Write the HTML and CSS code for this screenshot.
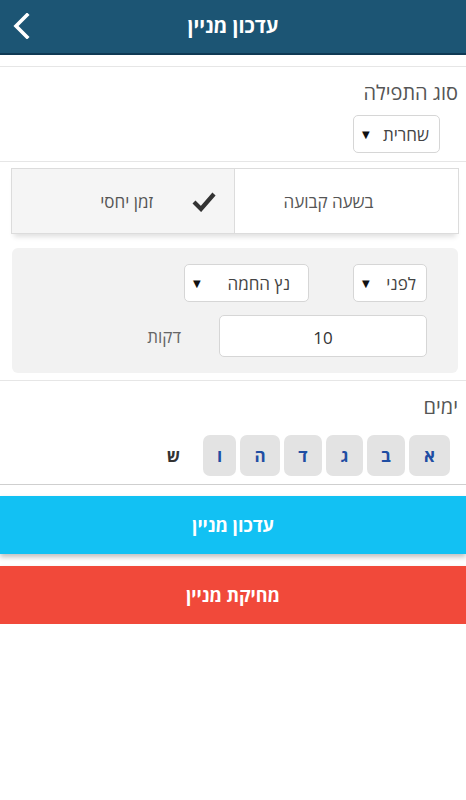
FILE: index.html
```html
<!DOCTYPE html>
<html lang="he" dir="rtl">
<head>
<meta charset="utf-8">
<link rel="stylesheet" href="styles.css">
</head>
<body>
<header class="topbar">
  <span class="back">
    <svg width="18" height="26" viewBox="0 0 18 26"><path d="M15 2 L4 13 L15 24" fill="none" stroke="#fff" stroke-width="3.6" stroke-linecap="square"/></svg>
  </span>
  <h1 class="title">עדכון מניין</h1>
</header>

<section class="block type">
  <div class="label">סוג התפילה</div>
  <div class="select sel-type"><span>שחרית</span><span class="caret">▼</span></div>
</section>

<div class="toggle">
  <div class="opt fixed">בשעה קבועה</div>
  <div class="opt active">
    <svg class="check" width="26" height="22" viewBox="0 0 26 22"><path d="M3 12 L10 19 L23 4" fill="none" stroke="#333" stroke-width="4.2"/></svg>
    <span>זמן יחסי</span>
  </div>
</div>

<div class="panel">
  <div class="row">
    <div class="select sel-before"><span>לפני</span><span class="caret">▼</span></div>
    <div class="select sel-sun"><span>נץ החמה</span><span class="caret">▼</span></div>
  </div>
  <div class="row row2">
    <div class="input">10</div>
    <div class="unit">דקות</div>
  </div>
</div>

<section class="block days-block">
  <div class="label">ימים</div>
  <div class="days">
    <span class="day d1">א</span>
    <span class="day d2">ב</span>
    <span class="day d3">ג</span>
    <span class="day d4">ד</span>
    <span class="day d5">ה</span>
    <span class="day d6">ו</span>
    <span class="sat">ש</span>
  </div>
</section>

<div class="btn update">עדכון מניין</div>
<div class="btn delete">מחיקת מניין</div>
</body>
</html>
```

FILE: styles.css
```css
* { box-sizing: border-box; }
html, body { margin: 0; padding: 0; background: #fff; }
body {
  width: 466px;
  font-family: "Open Sans", "Noto Sans", "DejaVu Sans", sans-serif;
  color: #555;
  direction: rtl;
}
.topbar {
  height: 55px;
  background: #1c5574;
  border-bottom: 2px solid #0f3954;
  display: flex;
  align-items: center;
  justify-content: center;
  position: relative;
}
.back {
  position: absolute;
  left: 12px;
  top: 13px;
  display: flex;
}
.title {
  margin: 0;
  color: #fff;
  font-size: 20px;
  font-weight: bold;
  line-height: 1;
  padding-bottom: 2px;
}
.block {
  border-top: 1px solid #e6e6e6;
  padding: 0 8px 0 8px;
}
.type {
  margin-top: 11px;
  padding-top: 11px;
  padding-bottom: 8px;
  border-bottom: 1px solid #e6e6e6;
  display: flex;
  flex-direction: column;
  align-items: flex-start;
}
.label {
  font-size: 20px;
  line-height: 30px;
  color: #555;
}
.select {
  display: flex;
  align-items: center;
  justify-content: space-between;
  border: 1px solid #d6d6d6;
  border-radius: 5px;
  background: #fff;
  height: 38px;
  font-size: 17px;
  color: #444;
  padding: 0 10px 0 8px;
}
.caret { font-size: 10px; color: #111; }
.sel-type { margin-top: 7px; margin-right: 18px; width: 87px; }
.toggle {
  margin: 6px 7px 0 11px;
  display: flex;
  height: 66px;
  border: 1px solid #dcdcdc;
  box-shadow: 0 6px 5px -3px rgba(0,0,0,0.12);
}
.opt {
  display: flex;
  align-items: center;
  font-size: 17px;
  color: #555;
  background: #fff;
}
.opt.fixed {
  width: 223px;
  justify-content: center;
  padding-right: 36px;
}
.opt.active {
  flex: 1;
  background: #f5f5f5;
  border-right: 1px solid #dcdcdc;
  justify-content: flex-start;
  padding-right: 17px;
  gap: 38px;
}
.panel {
  margin: 14px 8px 0 12px;
  background: #f2f2f2;
  border-radius: 6px;
  padding: 16px 31px 16px 0;
  display: flex;
  flex-direction: column;
  gap: 13px;
}
.row { display: flex; align-items: center; }
.sel-before { width: 74px; height: 38px; }
.sel-sun { width: 125px; height: 38px; margin-right: 44px; padding-right: 18px; }
.input {
  width: 208px;
  height: 42px;
  background: #fff;
  border: 1px solid #d6d6d6;
  border-radius: 5px;
  display: flex;
  align-items: center;
  justify-content: center;
  font-size: 17px;
  color: #333;
  padding-top: 2px;
}
.unit { margin-right: 38px; font-size: 17px; color: #666; }
.days-block {
  margin-top: 7px;
  padding-top: 11px;
  padding-bottom: 8px;
  border-bottom: 1px solid #cfcfcf;
}
.days {
  margin-top: 13px;
  display: flex;
  align-items: center;
  padding-right: 8px;
  gap: 4px;
}
.day {
  height: 41px;
  background: #e3e3e3;
  border-radius: 7px;
  display: flex;
  align-items: center;
  justify-content: center;
  color: #1f4ea3;
  font-size: 17px;
  font-weight: bold;
}
.d1 { width: 41px; }
.d2 { width: 38px; }
.d3 { width: 37px; }
.d4 { width: 38px; }
.d5 { width: 40px; }
.d6 { width: 33px; }
.sat { margin-right: 19px; font-size: 17px; font-weight: bold; color: #333; }
.btn {
  height: 58px;
  display: flex;
  align-items: center;
  justify-content: center;
  color: #fff;
  font-size: 18px;
  font-weight: bold;
  box-shadow: 0 3px 5px rgba(0,0,0,0.25);
}
.update { background: #12c1f3; margin-top: 11px; }
.delete { background: #f1493a; margin-top: 12px; }
```
